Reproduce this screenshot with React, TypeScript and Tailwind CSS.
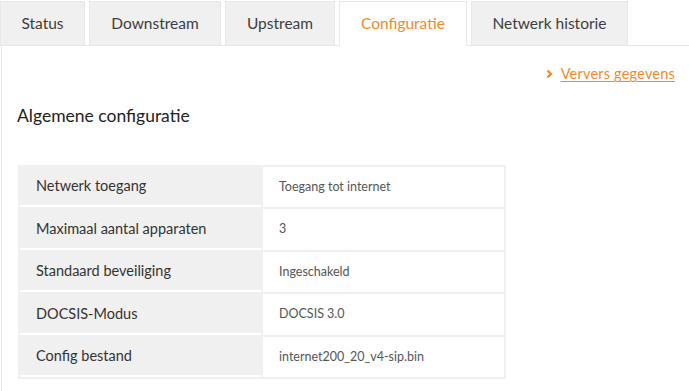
import React from "react";

const rows: [string, string][] = [
  ["Netwerk toegang", "Toegang tot internet"],
  ["Maximaal aantal apparaten", "3"],
  ["Standaard beveiliging", "Ingeschakeld"],
  ["DOCSIS-Modus", "DOCSIS 3.0"],
  ["Config bestand", "internet200_20_v4-sip.bin"],
];

const tabs = [
  { label: "Status", w: "w-[85px]" },
  { label: "Downstream", w: "w-[132px]" },
  { label: "Upstream", w: "w-[110px]" },
  { label: "Configuratie", w: "w-[128px]", active: true },
  { label: "Netwerk historie", w: "w-[157px]" },
];

export default function App() {
  return (
    <div
      className="w-[689px] h-[391px] bg-white overflow-hidden"
      style={{ fontFamily: "Lato, 'Open Sans', sans-serif" }}
    >
      <div className="flex gap-[4px] pt-[1px] h-[46px] relative z-10">
        {tabs.map((t) => (
          <div
            key={t.label}
            className={`${t.w} h-[45px] flex items-center justify-center text-[15.5px] border border-[#e8e8e8] ${
              t.active
                ? "bg-white text-[#f5892a] border-b-white"
                : "bg-[#f0f0f0] text-[#3d3d3d] border-b-[#e8e8e8]"
            }`}
          >
            {t.label}
          </div>
        ))}
      </div>
      <div className="border-t border-l border-[#e8e8e8] ml-px -mt-px h-[400px]">
        <div className="flex justify-end pr-[14px] pt-[17px]">
          <a className="flex items-center gap-[6px] text-[14.5px] text-[#f5892a] underline underline-offset-2 cursor-pointer tracking-[0.2px]">
            <svg width="7" height="10" viewBox="0 0 7 10" className="mr-[2px]">
              <path d="M1.5 1.5 L5 5 L1.5 8.5" stroke="#f5892a" strokeWidth="2.2" fill="none" />
            </svg>
            Ververs gegevens
          </a>
        </div>
        <h2 className="pl-[15px] mt-[19px] text-[17.5px] text-[#222] leading-[24px]">
          Algemene configuratie
        </h2>
        <div className="ml-[16px] mt-[37px] w-[488px] border-2 border-[#f0f0f0] bg-[#f0f0f0] flex flex-col gap-[2px]">
          {rows.map(([k, v]) => (
            <div key={k} className="flex gap-[2px] h-[40.5px]">
              <div className="w-[241px] bg-[#f0f0f0] border-b-2 border-white flex items-center pl-[16px] text-[14.5px] text-[#333]">
                {k}
              </div>
              <div className="flex-1 bg-white flex items-center pl-[16px] text-[12.5px] text-[#555]">
                {v}
              </div>
            </div>
          ))}
        </div>
      </div>
    </div>
  );
}
